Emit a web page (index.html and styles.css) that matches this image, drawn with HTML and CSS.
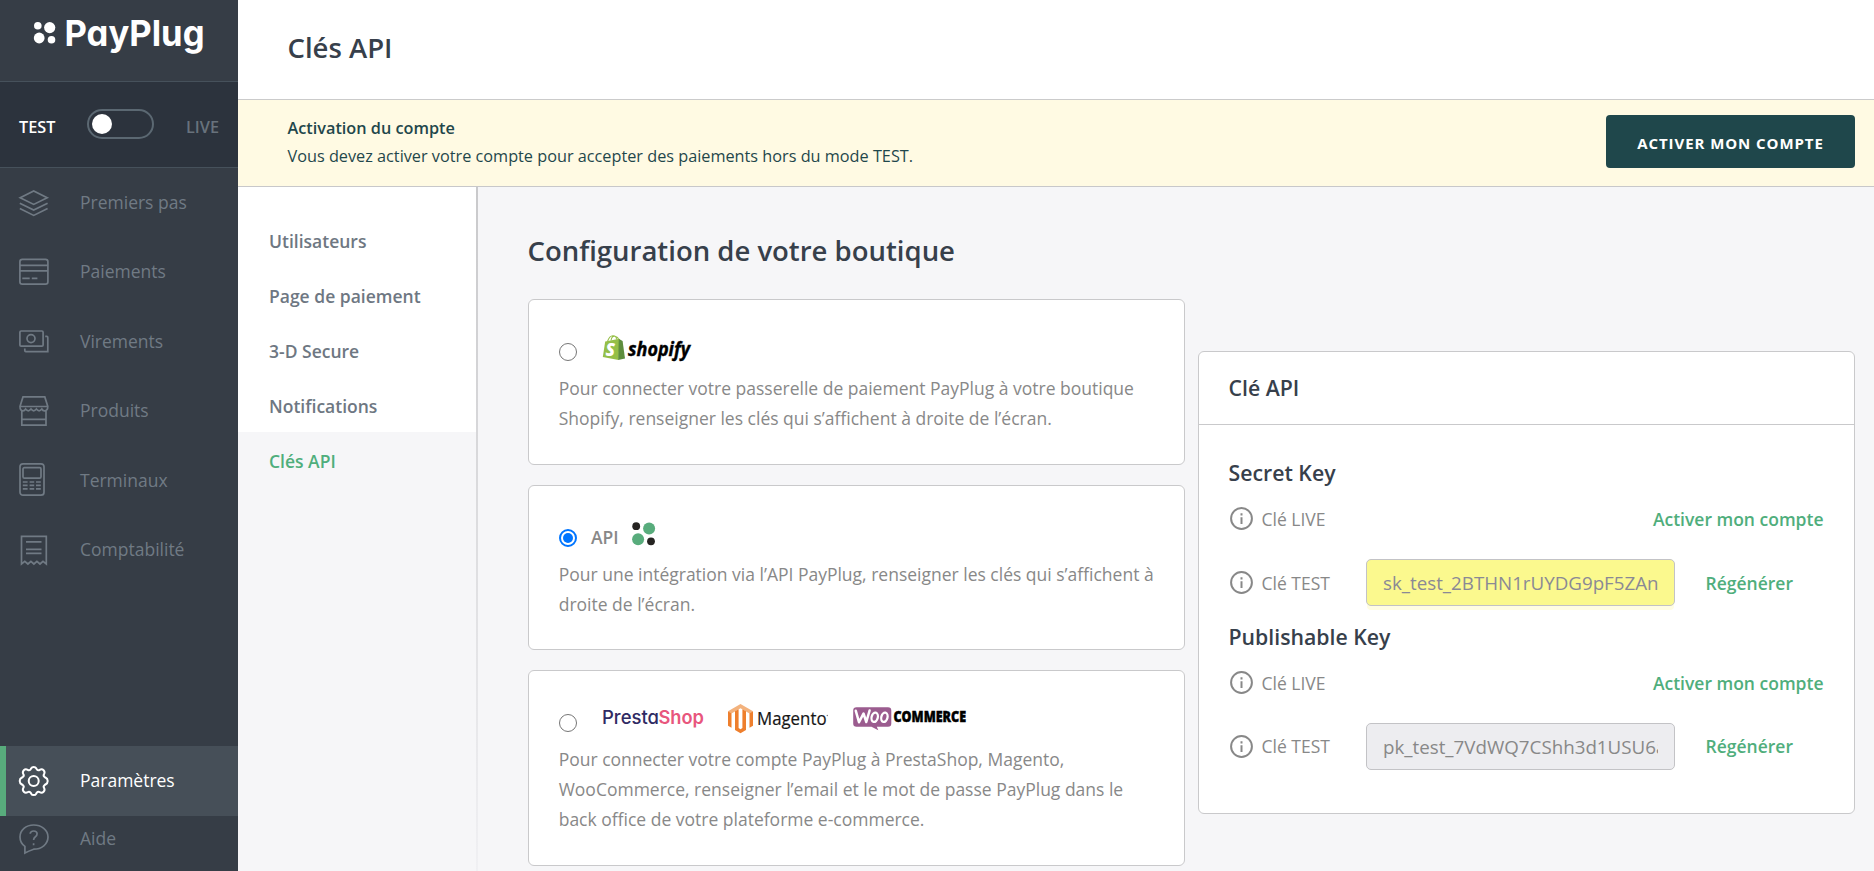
FILE: index.html
```html
<!DOCTYPE html>
<html lang="fr">
<head>
<meta charset="utf-8">
<title>PayPlug – Clés API</title>
<link rel="stylesheet" href="styles.css">
</head>
<body>
<div class="app">
  <aside class="sidebar">
    <div class="brand">
      <svg width="238" height="81" viewBox="0 0 238 81">
        <g fill="#fff"><circle cx="37.8" cy="25.8" r="3.8"/><circle cx="49.7" cy="27.6" r="5.6"/><circle cx="39.2" cy="38" r="5.4"/><circle cx="51.5" cy="39.8" r="3.8"/>
        <text class="geo" x="64.5" y="46.200" font-size="35.500" font-weight="650" textLength="140" lengthAdjust="spacingAndGlyphs">PayPlug</text></g>
      </svg>
    </div>
    <div class="mode">
      <span class="mode-on">TEST</span>
      <span class="switch"><span class="knob"></span></span>
      <span class="mode-off">LIVE</span>
    </div>
    <nav class="menu">
      <a class="item"><svg class="ico" viewBox="0 0 30 30"><path d="M1.2 9.8 14.7 2.9 28.2 9.8 14.7 16.4ZM.8 15.2 14.7 22 28.6 15.2M.8 20.6 14.7 27.4 28.6 20.6"/></svg><span>Premiers pas</span></a>
      <a class="item"><svg class="ico" viewBox="0 0 30 30"><rect x=".9" y="2.4" width="28" height="24.8" rx="2.4"/><path d="M1 8.3h28M1 13.9h28M3.3 21.4h7.4M12.8 21.4h5.6"/></svg><span>Paiements</span></a>
      <a class="item"><svg class="ico" viewBox="0 0 30 30"><rect x=".9" y="5" width="23.2" height="15.2" rx="1.2"/><circle cx="12" cy="12.6" r="4"/><path d="M26.2 10.4h1.6q1 0 1 1V25.600h-22q-1 0-1-1v-2"/></svg><span class="low">Virements</span></a>
      <a class="item"><svg class="ico" viewBox="0 0 30 30"><path d="M4 .9h21.800l3 9.600q0 4.200-3.300 4.300q-1.700 0-2.700-1.800q-1.400 1.800-2.700 1.800t-2.700-1.800q-1.400 1.800-2.700 1.800t-2.700-1.800q-1.400 1.800-2.700 1.800t-2.700-1.800q-1 1.800-2.700 1.800Q1 14.600 1 10.500ZM1 10.500h28M2.800 14.800v14.300h24.200V14.800M2.800 23.300h24"/></svg><span>Produits</span></a>
      <a class="item"><svg class="ico" viewBox="0 0 30 30"><rect x="1" y="-1.200" width="24" height="31.400" rx="3"/><rect x="4" y="2.600" width="18" height="10.600" rx="1.400"/><path d="M3.800 17h4.800M10.600 17h4.600M17 17h4.800M3.800 20.400h4.800M10.600 20.400h4.600M17 20.400h4.800M3.800 23.800h4.800M10.600 23.800h4.600M17 23.800h4.800"/></svg><span class="low">Terminaux</span></a>
      <a class="item"><svg class="ico" viewBox="0 0 30 30"><path d="M2.500 29V1.300h24.800V29l-3.300-2.700-3 2.700-3.100-2.700-3 2.700-3-2.700-3 2.700-3.100-2.700ZM7 6.800h15.500M7 14.300h15.500M7 18.300h15.500"/></svg><span>Comptabilité</span></a>
    </nav>
    <nav class="menu menu-bottom">
      <a class="item active"><svg class="ico gear" viewBox="0 0 30 30"><circle cx="14.700" cy="15" r="5"/><path d="M11.600 3.300C12.300 2.400 12.400.9 14.700.9s2.400 1.500 3.100 2.400c.9 1.100 2 1.200 2.900.6 1-.6 2.500-1 3.900.4s1 2.900.4 3.900c-.6.900-.4 2 .700 2.900.9.700 3 .8 3 3.900s-2.100 3.200-3 3.900c-1.100.9-1.300 2-.7 2.900.6 1 1 2.500-.4 3.900s-2.900 1-3.900.4c-.9-.6-2-.5-2.900.6-.7.9-.8 2.400-3.100 2.400s-2.400-1.500-3.100-2.400c-.9-1.100-2-1.200-2.900-.6-1 .6-2.500 1-3.900-.4s-1-2.900-.4-3.900c.6-.9.400-2-.7-2.900-.9-.7-3-.8-3-3.900s2.100-3.200 3-3.900c1.100-.9 1.300-2 .7-2.900-.6-1-1-2.500.4-3.900s2.900-1 3.900-.4c.9.600 2 .5 2.900-.6Z"/></svg><span>Paramètres</span></a>
      <a class="item help"><svg class="ico" viewBox="0 0 30 30"><path d="M5.900 30V23.400Q1 19.800 1 14C1 6.800 7 2 14.700 2S29 6.800 29 14 22.500 26.200 14.700 26.200Q9.500 28 5.900 30Z"/><path d="M11.200 10.800q.2-2.800 3.500-2.800 3.300 0 3.400 2.800 0 1.900-1.700 3-1.800 1.300-1.800 3.200M14.600 20.300v1.900"/></svg>Aide</a>
    </nav>
  </aside>

  <main class="main">
    <header class="top"><h1>Clés API</h1></header>
    <section class="banner">
      <div>
        <p class="strong">Activation du compte</p>
        <p>Vous devez activer votre compte pour accepter des paiements hors du mode TEST.</p>
      </div>
      <button class="cta">ACTIVER MON COMPTE</button>
    </section>
    <div class="content">
      <nav class="subnav">
        <a>Utilisateurs</a>
        <a>Page de paiement</a>
        <a>3-D Secure</a>
        <a>Notifications</a>
        <a class="current">Clés API</a>
        <span class="rest"></span>
      </nav>
      <div class="divider"></div>
      <section class="shop">
        <h2>Configuration de votre boutique</h2>
        <div class="card">
          <div class="card-head">
            <span class="radio"></span>
            <svg class="logo logo-shopify" width="90" height="30" viewBox="603 332 90 30">
              <path fill="#95bf47" d="M605.200 341.500 619.500 338.700 618.500 360 602.800 357.100Z"/>
              <path fill="#5e8e3e" d="M618.800 338.700 622.600 341 625 358.400 618.200 360Z"/>
              <path fill="none" stroke="#95bf47" stroke-width="1.100" d="M607.500 341.500Q609.500 335.700 613 335.800T616.500 339.500M611 340.500Q612 335.500 615 336.200T618.500 339"/>
              <text x="605.600" y="355.900" fill="#fff" font-family="Open Sans, sans-serif" font-size="17" font-weight="800" font-style="italic" textLength="9.500" lengthAdjust="spacingAndGlyphs">S</text>
              <text x="628" y="355.800" font-family="Open Sans, sans-serif" font-size="20" font-weight="700" font-style="italic" stroke="#000" stroke-width=".4" textLength="62" lengthAdjust="spacingAndGlyphs">shopify</text>
            </svg>
          </div>
          <p>Pour connecter votre passerelle de paiement PayPlug à votre boutique<br>Shopify, renseigner les clés qui s’affichent à droite de l’écran.</p>
        </div>
        <div class="card">
          <div class="card-head">
            <span class="radio checked"></span>
            <span class="api">API</span>
            <svg class="logo-api" width="24" height="24" viewBox="0 0 24 24"><circle cx="4.200" cy="4.200" r="3.900" fill="#262422"/><circle cx="17.100" cy="6.400" r="6" fill="#58ac7c"/><circle cx="6.100" cy="17.300" r="6" fill="#58ac7c"/><circle cx="19" cy="19.300" r="3.900" fill="#262422"/></svg>
          </div>
          <p>Pour une intégration via l’API PayPlug, renseigner les clés qui s’affichent à<br>droite de l’écran.</p>
        </div>
        <div class="card">
          <div class="card-head">
            <span class="radio"></span>
            <svg class="logo logo-cms" width="370" height="36" viewBox="603 701 370 36">
              <text class="geo" x="602" y="724" font-size="18.500" font-weight="550" fill="#2f2a63" textLength="57" lengthAdjust="spacingAndGlyphs">Presta</text>
              <text class="geo" x="658.500" y="724" font-size="18.500" font-weight="600" fill="#e8567d" textLength="45.500" lengthAdjust="spacingAndGlyphs">Shop</text>
              <path fill="#f3b27d" d="M740.500 703.900 753 711.200 749.500 713.400 740.500 708.200 731.500 713.400 728 711.200Z"/>
              <path fill="#ee7f2d" d="M728 711.200 731.500 713.200V727.800L728 725.800ZM753 711.200 749.500 713.200V727.800L753 725.800ZM735 711.300 738.600 709.300V728L740.500 729.200 742.400 728V709.300L746 711.300V730L740.500 733.200 735 730Z"/>
              <text x="757" y="725.300" font-family="Open Sans, sans-serif" font-size="18" font-weight="400" fill="#161616" stroke="#161616" stroke-width=".2" textLength="69.500" lengthAdjust="spacingAndGlyphs">Magento</text>
              <circle cx="827.300" cy="715.500" r=".7" fill="#777"/>
              <path fill="#9b5c8f" d="M856.500 707.200H888Q891.300 707.200 891.300 710.500V723.500Q891.300 726.800 888 726.800H876.800L878.300 730.200 871.500 726.800H856.500Q853.200 726.800 853.200 723.500V710.500Q853.200 707.200 856.500 707.200Z"/>
              <path fill="none" stroke="#fff" stroke-width="2.500" stroke-linejoin="round" stroke-linecap="round" d="M855.800 710.800 859 722.200 863.500 713.500 866.300 722 869.600 710.500"/>
              <ellipse cx="874.700" cy="717.300" rx="3.100" ry="4.700" transform="rotate(14 874.700 717.300)" fill="none" stroke="#fff" stroke-width="2.300"/>
              <ellipse cx="884.400" cy="717.300" rx="3.100" ry="4.700" transform="rotate(14 884.400 717.300)" fill="none" stroke="#fff" stroke-width="2.300"/>
              <text x="893.500" y="722.300" font-family="Open Sans, sans-serif" font-size="16.500" font-weight="800" stroke="#000" stroke-width=".5" textLength="72.500" lengthAdjust="spacingAndGlyphs">COMMERCE</text>
            </svg>
          </div>
          <p>Pour connecter votre compte PayPlug à PrestaShop, Magento,<br>WooCommerce, renseigner l’email et le mot de passe PayPlug dans le<br>back office de votre plateforme e-commerce.</p>
        </div>
      </section>
      <section class="panel">
        <h3 class="panel-head">Clé API</h3>
        <div class="panel-body">
          <h3>Secret Key</h3>
          <div class="row"><svg class="info" viewBox="0 0 24 24"><circle cx="12" cy="12" r="10"/><path d="M12 7v2.200M12 10.700v6.500"/></svg><span>Clé LIVE</span><a class="link end">Activer mon compte</a></div>
          <div class="row keyrow first"><svg class="info" viewBox="0 0 24 24"><circle cx="12" cy="12" r="10"/><path d="M12 7v2.200M12 10.700v6.500"/></svg><span class="label">Clé TEST</span><input class="key hot" readonly value="sk_test_2BTHN1rUYDG9pF5ZAn"><a class="link">Régénérer</a></div>
          <h3>Publishable Key</h3>
          <div class="row"><svg class="info" viewBox="0 0 24 24"><circle cx="12" cy="12" r="10"/><path d="M12 7v2.200M12 10.700v6.500"/></svg><span>Clé LIVE</span><a class="link end">Activer mon compte</a></div>
          <div class="row keyrow"><svg class="info" viewBox="0 0 24 24"><circle cx="12" cy="12" r="10"/><path d="M12 7v2.200M12 10.700v6.500"/></svg><span class="label">Clé TEST</span><input class="key" readonly value="pk_test_7VdWQ7CShh3d1USU6a"><a class="link">Régénérer</a></div>
        </div>
      </section>
    </div>
  </main>
</div>
</body>
</html>
```
FILE: styles.css
```css
* { box-sizing: border-box; }
body { margin: 0; font-family: "Open Sans", "Noto Sans", sans-serif; font-size: 17.5px; color: #888; background: #f6f6f8; }
h1, h2, h3, p { margin: 0; }
.app { display: flex; height: 871px; overflow: hidden; }

.sidebar { width: 238px; flex: none; display: flex; flex-direction: column; background: #363d46; }
.brand { height: 81px; }
.brand svg { display: block; }
.geo { font-family: Inter, sans-serif; font-feature-settings: "cv11"; }
.mode { height: 87px; border-top: 1px solid #46515b; border-bottom: 1px solid #46515b; background: #2c333d; padding: 4px 19px 0; display: flex; align-items: center; justify-content: space-between; font-size: 16.25px; }
.mode-on { color: #fff; font-weight: 600; }
.mode-off { color: #68727c; font-weight: 600; }
.switch { width: 67px; height: 30px; border: 2px solid #5b6872; border-radius: 15px; padding: 3px; margin: -6px 0 0 0; }
.knob { display: block; width: 20px; height: 20px; border-radius: 50%; background: #fff; }
.menu { display: flex; flex-direction: column; }
.item { height: 69.4px; display: flex; align-items: center; gap: 31px; padding: 0 19px; color: #707a84; }
.item span { padding-bottom: 2px; }
.item .low { padding-bottom: 1px; }
.ico { width: 30px; height: 30px; flex: none; overflow: visible; fill: none; stroke: currentColor; stroke-width: 1.7; }
.ico.gear { stroke-width: 2; }
.menu-bottom { margin-top: auto; height: 125px; }
.item.active { height: 70px; background: #464f58; color: #fff; border-left: 6px solid #58ac7c; padding-left: 13px; }
.item.help { height: 44px; }

.main { flex: 1; display: flex; flex-direction: column; min-width: 0; }
.top { height: 99px; background: #fff; padding: 28px 50px 0 49.500px; }
h1, h2 { font-size: 27.5px; font-weight: 600; line-height: 40px; color: #37404b; }
.banner { height: 88px; flex: none; background: #fffae3; border-top: 1px solid #cbcbcb; border-bottom: 1px solid #c8c8ca; display: flex; justify-content: space-between; padding: 14px 19px 0 49.500px; color: #1f474b; font-size: 16.25px; line-height: 28px; }
.strong { font-weight: 600; }
.cta { width: 249px; height: 53px; margin-top: 1px; border: 0; border-radius: 4px; background: #1f474b; color: #fff; font: 700 15px "Open Sans", sans-serif; letter-spacing: .93px; padding: 3px 0 0; }
.content { flex: 1; display: flex; min-height: 0; }
.subnav { width: 238px; display: flex; flex-direction: column; padding-top: 25px; background: #fff; }
.subnav a { height: 55px; flex: none; line-height: 58px; padding-left: 31px; font-weight: 600; color: #6e7782; }
.subnav a.current { background: #f6f6f8; color: #4fae7c; }
.rest { flex: 1; background: #f6f6f8; }
.divider { width: 2px; background: linear-gradient(#c9c9cb, #f0f0f3); }

.shop { width: 657px; margin-left: 50px; padding-top: 44px; flex: none; }
.shop h2 { height: 68px; margin-left: -.5px; }
.card { background: #fff; border: 1px solid #c9c9cb; border-radius: 6px; padding: 30px 30px 30.600px 29.700px; margin-bottom: 20px; width: 657px; }
.card-head { height: 43px; display: flex; }
.card p { line-height: 30px; white-space: nowrap; }
.radio { width: 18px; height: 18px; border: 1.300px solid #767676; border-radius: 50%; margin-top: 13px; margin-left: .3px; }
.radio.checked { border: 2px solid #0075ff; background: #0075ff; background-clip: content-box; padding: 2px; }
.logo { margin-left: 26px; font-size: 16px; overflow: visible; }
.logo-shopify { margin-top: 2px; }
.api { font-weight: 600; margin: 9.500px 13.500px 0 14px; }
.logo-api { margin-top: 6px; }

.panel { margin: 164px 0 0 12.500px; width: 657px; height: 463px; flex: none; background: #fff; border: 1px solid #c9c9cb; border-radius: 6px; }
h3 { font-size: 21.25px; font-weight: 600; color: #37404b; height: 46px; line-height: 46px; }
.panel-head { height: 73px; line-height: 71px; border-bottom: 1px solid #c9c9cb; padding-left: 30px; }
.panel-body { padding: 24.500px 30px 0; }
.row { height: 46px; display: flex; align-items: center; }
.info { width: 25px; height: 25px; flex: none; margin-right: 7.500px; margin-left: .5px; fill: none; stroke: #888; stroke-width: 1.900; }
.end { margin-left: auto; }
.link { font-weight: 600; color: #4fae7c; }
.keyrow { height: 47px; margin: 17px 0 8px; }
.keyrow.first .label, .keyrow.first .link { padding-top: 1px; }
.label { width: 104px; }
.key { width: 309px; height: 47px; margin-right: 31px; padding: 1px 15.500px 0 16.500px; border: 1px solid #c3c3c6; border-radius: 5px; background: #ededf0; color: #888; font: 18.750px "Open Sans", sans-serif; outline: none; }
.key.hot { background: #fbf98e; color: #8a8995; box-shadow: 0 5px 0 -1px #fffde3; }
```
